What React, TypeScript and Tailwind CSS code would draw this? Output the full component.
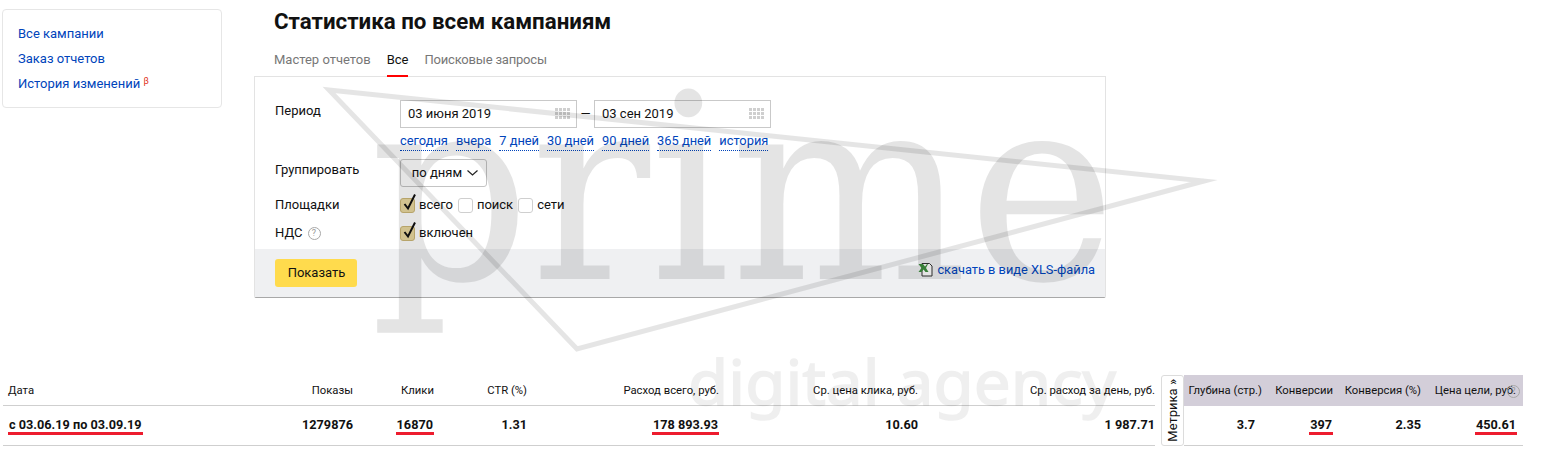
import React from 'react';

const font = { fontFamily: 'Roboto, sans-serif' };

function Watermark() {
  return (
    <svg className="absolute inset-0 pointer-events-none" width="1541" height="451" viewBox="0 0 1541 451">
      <polygon points="329,90 1204,181 577,349" fill="none" stroke="#000" strokeOpacity="0.1" strokeWidth="5" strokeMiterlimit="20" />
      <text x="370" y="279" fontFamily="DejaVu Serif" fontSize="259" textLength="746" lengthAdjust="spacingAndGlyphs" fill="#000" opacity="0.1">prime</text>
      <text x="688" y="405" fontFamily="Noto Sans" fontSize="62" textLength="428" lengthAdjust="spacingAndGlyphs" fill="#000" stroke="#000" strokeWidth="1.5" opacity="0.06">digital agency</text>
    </svg>
  );
}

function CalIcon() {
  return (
    <svg width="15" height="12" viewBox="0 0 15 12" className="shrink-0">
      {[0, 1, 2].map((r) =>
        [0, 1, 2, 3].map((c) => (
          <rect key={`${r}-${c}`} x={c * 4} y={r * 4} width="3" height="3" fill="#cfcfcf" />
        ))
      )}
    </svg>
  );
}

function DateInput({ value }: { value: string }) {
  return (
    <div className="w-[177px] h-[28px] border border-[#c9c9c9] flex items-center justify-between pl-[7px] pr-[6px] text-[13px] text-[#111] bg-white">
      <span>{value}</span>
      <CalIcon />
    </div>
  );
}

function Check({ on }: { on?: boolean }) {
  return (
    <span className={`relative inline-block w-[15px] h-[15px] rounded-[3px] border ${on ? 'bg-[#ead9a0] border-[#cdb877]' : 'bg-white border-[#cfcfcf]'}`}>
      {on && (
        <svg className="absolute left-[1px] top-[-7px]" width="16" height="20" viewBox="0 0 16 20">
          <path d="M2.5 12 L6 16.5 L13 2.5" fill="none" stroke="#111" strokeWidth="2" />
        </svg>
      )}
    </span>
  );
}

function Hint({ className }: { className?: string }) {
  return (
    <span className={`inline-flex items-center justify-center w-[13px] h-[13px] rounded-full border border-[#a8a8a8] text-[9px] leading-none text-[#999] ${className ?? ''}`}>?</span>
  );
}

function ExcelIcon() {
  return (
    <svg width="15" height="15" viewBox="0 0 15 15" className="shrink-0">
      <path d="M4 1.5 H11.5 L14 4 V14 H4 Z" fill="#fff" stroke="#333" strokeWidth="1" />
      <path d="M0.5 2 H5 L7 4.5 L9 2 H10 L8 6 L10.5 10 H7.5 L5.5 7.5 L3.5 10 H0.5 L3.5 6 Z" fill="#3f8f3f" />
    </svg>
  );
}

const quick = ['сегодня', 'вчера', '7 дней', '30 дней', '90 дней', '365 дней', 'история'];

const headers = ['Показы', 'Клики', 'CTR (%)', 'Расход всего, руб.', 'Ср. цена клика, руб.', 'Ср. расход за день, руб.'];
const values: [string, boolean][] = [
  ['1279876', false],
  ['16870', true],
  ['1.31', false],
  ['178 893.93', true],
  ['10.60', false],
  ['1 987.71', false],
];
const metricHeaders: [string, string][] = [
  ['Глубина (стр.)', ''],
  ['Конверсии', ''],
  ['Конверсия (%)', ''],
  ['Цена цели, руб.', 'pr-[7px]'],
];
const metricValues: [string, boolean, string][] = [
  ['3.7', false, 'pr-[7px]'],
  ['397', true, ''],
  ['2.35', false, ''],
  ['450.61', true, 'pr-[6px]'],
];

function Val({ text, mark }: { text: string; mark: boolean }) {
  return <span className={`inline-block whitespace-nowrap leading-[15px] ${mark ? 'border-b-[3px] border-[#ed1c2e] px-[1px]' : 'border-b-[3px] border-transparent'}`}>{text}</span>;
}

export default function App() {
  return (
    <div className="relative w-[1541px] h-[451px] overflow-hidden bg-white text-[#111]" style={font}>
      <div className="flex items-start h-[375px]">
        <aside className="ml-[2px] mt-[9px] w-[220px] h-[99px] border border-[#e6e6e6] rounded-[4px] pt-[15px] pl-[15px] flex flex-col gap-[7px] text-[13px] leading-[18px] text-[#0044bb]">
          <a>Все кампании</a>
          <a>Заказ отчетов</a>
          <a>
            История изменений <sup className="text-[9px] text-[#e03020]">β</sup>
          </a>
        </aside>

        <main className="ml-[32px] w-[852px]">
          <h1 className="pl-[20px] pt-[6px] text-[22.3px] leading-[30px] font-bold text-[#111]">Статистика по всем кампаниям</h1>
          <nav className="flex gap-[16px] pl-[20px] mt-[15px] text-[13px] leading-[18px] text-[#777]">
            <span className="h-[26px]">Мастер отчетов</span>
            <span className="h-[26px] text-[#111] border-b-2 border-[#f00] relative z-10">Все</span>
            <span className="h-[26px] tracking-[-0.2px]">Поисковые запросы</span>
          </nav>

          <section className="-mt-[1px] h-[222px] border border-[#e3e3e3] border-b-[#a8a8a8] rounded-b-[2px] flex flex-col text-[13px]">
            <div className="flex-1 pl-[20px] pt-[23px] grid grid-cols-[125px_1fr] content-start">
              <div className="mt-[1px] leading-[20px]">Период</div>
              <div>
                <div className="flex items-center">
                  <DateInput value="03 июня 2019" />
                  <span className="w-[17px] text-center">—</span>
                  <DateInput value="03 сен 2019" />
                </div>
                <div className="flex gap-[8px] mt-[4px] leading-[18px] text-[12.85px] text-[#0044bb]">
                  {quick.map((q) => (
                    <span key={q} className="border-b border-dotted border-[#0044bb]">{q}</span>
                  ))}
                </div>
              </div>
              <div className="mt-[9px] leading-[20px]">Группировать</div>
              <div className="mt-[8px]">
                <div className="w-[87px] h-[28px] border border-[#c4c4c4] rounded-[3px] flex items-center justify-center gap-[5px] pl-[3px]">
                  по дням
                  <svg width="11" height="6" viewBox="0 0 11 6"><path d="M0.5 0.5 L5.5 5 L10.5 0.5" fill="none" stroke="#222" strokeWidth="1.2" /></svg>
                </div>
              </div>
              <div className="mt-[8px] leading-[20px]">Площадки</div>
              <div className="mt-[8px] flex items-center gap-[4px] leading-[20px]">
                <Check on /><span className="mr-[1px]">всего</span>
                <Check /><span className="mr-[1px]">поиск</span>
                <Check /><span>сети</span>
              </div>
              <div className="mt-[8px] flex items-center gap-[5px] leading-[20px]">НДС <Hint /></div>
              <div className="mt-[8px] flex items-center gap-[4px] leading-[20px]">
                <Check on /><span>включен</span>
              </div>
            </div>
            <div className="h-[48px] bg-[#eff0f2] flex items-center justify-between pl-[20px] pr-[10px]">
              <button className="w-[82px] h-[28px] rounded-[3px] bg-[#ffdb4d] text-[#111] pl-[1px] pb-[1px]">Показать</button>
              <a className="flex items-center gap-[4px] mb-[7px] text-[12.8px] text-[#0044bb]"><ExcelIcon />скачать в виде XLS-файла</a>
            </div>
          </section>
        </main>
      </div>

      <div className="ml-[3px] w-[1520px] grid grid-cols-[240px_110px_81px_93px_192px_199px_237px_29px_78px_71px_88px_102px] grid-rows-[31px_40px] text-[11.3px]">
        <div className="border-b border-[#cfcfcf] flex items-center pl-[5px] pt-[3px]">Дата</div>
        {headers.map((h) => (
          <div key={h} className="border-b border-[#cfcfcf] flex items-center justify-end whitespace-nowrap pt-[3px]">{h}</div>
        ))}
        <div className="row-span-2 flex justify-end">
          <div className="w-[23px] h-[71px] bg-white border border-[#dcdcdc] rounded-[3px] flex items-center justify-center">
            <span className="[writing-mode:vertical-rl] rotate-180 text-[13px] leading-none whitespace-nowrap">Метрика »</span>
          </div>
        </div>
        {metricHeaders.map(([h, pad]) => (
          <div key={h} className={`bg-[#d3ced9] flex items-center justify-end whitespace-nowrap border-b border-[#d3ced9] pt-[2px] ${pad}`}>{h}</div>
        ))}
        <div className="border-b border-[#cfcfcf] flex items-center pl-[5px] text-[12.7px] font-bold"><Val text="с 03.06.19 по 03.09.19" mark /></div>
        {values.map(([v, m]) => (
          <div key={v} className="border-b border-[#cfcfcf] flex items-center justify-end text-[12.7px] font-bold"><Val text={v} mark={m} /></div>
        ))}
        {metricValues.map(([v, m, pad]) => (
          <div key={v} className={`border-b border-[#cfcfcf] flex items-center justify-end text-[12.7px] font-bold ${pad}`}><Val text={v} mark={m} /></div>
        ))}
      </div>
      <Hint className="absolute left-[1507px] top-[385px]" />

      <Watermark />
    </div>
  );
}
